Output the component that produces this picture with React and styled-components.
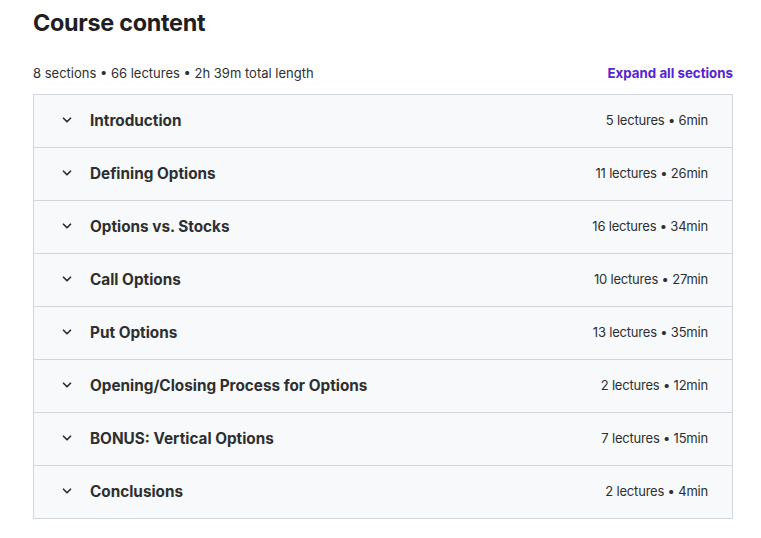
import React from "react"
import styled, { createGlobalStyle } from "styled-components"

const GlobalStyle = createGlobalStyle`
  body {
    margin: 0;
    background: #ffffff;
    font-family: Inter, "Noto Sans", sans-serif;
    color: #2d2f31;
  }
`

const Page = styled.div`
  padding: 8px 28px 0 33px;
  width: 700px;
`

const Title = styled.h2`
  margin: 0;
  font-size: 23.4px;
  font-weight: 700;
  letter-spacing: -0.3px;
  color: #1f2022;
  line-height: 30px;
`

const SummaryBar = styled.div`
  display: flex;
  justify-content: space-between;
  align-items: center;
  margin-top: 27px;
  height: 16px;
  margin-bottom: 13px;
`

const Summary = styled.span`
  font-size: 13px;
  color: #2d2f31;
`

const ExpandLink = styled.button`
  border: none;
  background: none;
  padding: 0;
  font-family: inherit;
  font-size: 13.3px;
  font-weight: 700;
  color: #5624d0;
  cursor: pointer;
`

const Panel = styled.div`
  border: 1px solid #d1d7dc;
  border-bottom: none;
`

const Row = styled.div`
  display: flex;
  align-items: center;
  box-sizing: border-box;
  height: 53px;
  padding: 0 24px 2px 26px;
  background: #f7f9fa;
  border-bottom: 1px solid #d1d7dc;
`

const Chevron = styled.svg`
  width: 14px;
  height: 14px;
  margin-right: 16px;
  flex-shrink: 0;
`

const SectionTitle = styled.span`
  flex: 1;
  font-size: 15.3px;
  font-weight: 700;
  color: #2d2f31;
`

const Meta = styled.span`
  font-size: 13px;
  letter-spacing: -0.2px;
  color: #2d2f31;
`

const sections = [
  ["Introduction", "5 lectures • 6min"],
  ["Defining Options", "11 lectures • 26min"],
  ["Options vs. Stocks", "16 lectures • 34min"],
  ["Call Options", "10 lectures • 27min"],
  ["Put Options", "13 lectures • 35min"],
  ["Opening/Closing Process for Options", "2 lectures • 12min"],
  ["BONUS: Vertical Options", "7 lectures • 15min"],
  ["Conclusions", "2 lectures • 4min"],
]

export default function App() {
  return (
    <>
      <GlobalStyle />
      <Page>
        <Title>Course content</Title>
        <SummaryBar>
          <Summary>8 sections • 66 lectures • 2h 39m total length</Summary>
          <ExpandLink>Expand all sections</ExpandLink>
        </SummaryBar>
        <Panel>
          {sections.map(([name, meta]) => (
            <Row key={name}>
              <Chevron viewBox="0 0 24 24">
                <path
                  d="M6 9l6 6 6-6"
                  fill="none"
                  stroke="#2d2f31"
                  strokeWidth="3"
                  strokeLinecap="round"
                  strokeLinejoin="round"
                />
              </Chevron>
              <SectionTitle>{name}</SectionTitle>
              <Meta>{meta}</Meta>
            </Row>
          ))}
        </Panel>
      </Page>
    </>
  )
}
